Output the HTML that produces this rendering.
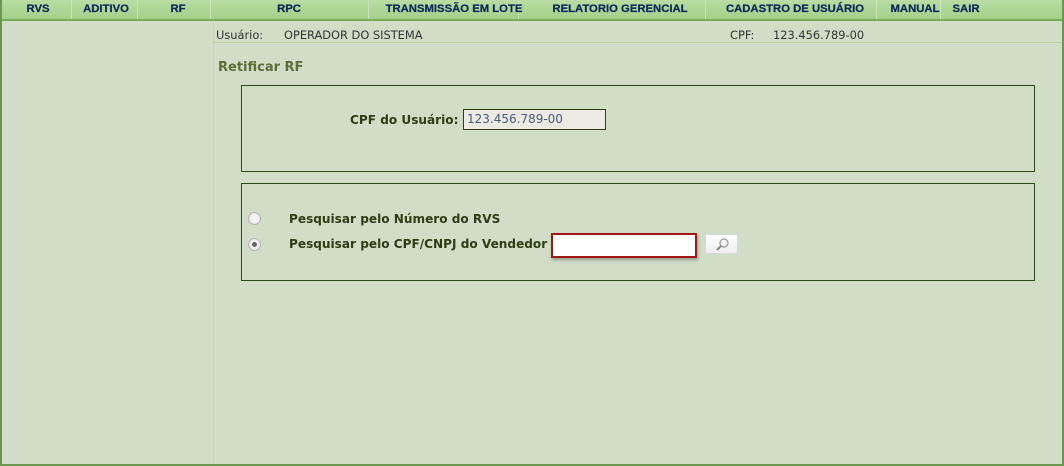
<!DOCTYPE html>
<html><head><meta charset="utf-8"><style>
*{margin:0;padding:0;box-sizing:border-box}
body{width:1064px;height:466px;background:#d1ddc6;font-family:"DejaVu Sans","Liberation Sans",sans-serif;position:relative;overflow:hidden}
.frame{position:absolute;left:0;top:0;width:1064px;height:466px;border:2px solid #6a9650;border-top:none}
.nav{position:absolute;left:0;top:0;width:1064px;height:21px;background:linear-gradient(#b9dca2,#a5cf8a);border-bottom:2px solid #78ae5a}
.nav span{position:absolute;z-index:2;top:3px;font:bold 11.3px "Liberation Sans",sans-serif;color:#0c2858;white-space:nowrap;transform:translateX(-50%);-webkit-text-stroke:0.25px #0c2858}
.sep{position:absolute;z-index:1;top:0;height:19px;width:1px;background:#c9e4b7}
.vl{position:absolute;left:213px;top:23px;width:1px;height:443px;background:#c5d8b6}
.t{position:absolute;font-size:11.4px;color:#333;white-space:nowrap}
.hl{position:absolute;left:214px;top:42px;width:848px;height:1px;background:#b9d3a5}
.box{position:absolute;left:241px;width:794px;border:1px solid #2e4a1f}
b.l{position:absolute;font:bold 12.1px "DejaVu Sans",sans-serif;color:#2e3d15;white-space:nowrap}
.radio{position:absolute;width:13px;height:13px;border-radius:50%;border:1px solid #b5b5b5;background:radial-gradient(#fff,#ddd)}
</style></head><body>
<div class="nav">
<span style="left:38px">RVS</span><div class="sep" style="left:71px"></div>
<span style="left:106px">ADITIVO</span><div class="sep" style="left:137px"></div>
<span style="left:178px">RF</span><div class="sep" style="left:210px"></div>
<span style="left:289px">RPC</span><div class="sep" style="left:368px"></div>
<span style="left:454px">TRANSMISSÃO EM LOTE</span><div class="sep" style="left:518px"></div>
<span style="left:620px">RELATORIO GERENCIAL</span><div class="sep" style="left:705px"></div>
<span style="left:795px">CADASTRO DE USUÁRIO</span><div class="sep" style="left:876px"></div>
<span style="left:915px">MANUAL</span><div class="sep" style="left:940px"></div>
<span style="left:966px">SAIR</span>
</div>
<div class="vl"></div>
<div class="t" style="left:216px;top:28px">Usuário:</div>
<div class="t" style="left:284px;top:28px">OPERADOR DO SISTEMA</div>
<div class="t" style="left:730px;top:28px">CPF:</div>
<div class="t" style="left:773px;top:28px">123.456.789-00</div>
<div class="hl"></div>
<b class="l" style="left:218px;top:60px;font-size:13px;color:#5a6e3a">Retificar RF</b>
<div class="box" style="top:85px;height:87px"></div>
<b class="l" style="left:350px;top:113px">CPF do Usuário:</b>
<div style="position:absolute;left:463px;top:109px;width:143px;height:21px;border:1px solid #2e3d1a;background:#ebebe4;font-size:12px;color:#4a5a78;padding:2px 3px">123.456.789-00</div>
<div class="box" style="top:183px;height:98px"></div>
<div class="radio" style="left:248px;top:212px"></div>
<div class="radio" style="left:248px;top:238px"><div style="position:absolute;left:3px;top:3px;width:5px;height:5px;border-radius:50%;background:#666"></div></div>
<b class="l" style="left:289px;top:212px">Pesquisar pelo Número do RVS</b>
<b class="l" style="left:289px;top:237px">Pesquisar pelo CPF/CNPJ do Vendedor</b>
<div style="position:absolute;left:551px;top:233px;width:146px;height:25px;border:2px solid #a01818;background:#fff;box-shadow:1px 2px 3px rgba(0,0,0,.3)"></div>
<div style="position:absolute;left:705px;top:234px;width:33px;height:20px;border:1px solid #d8d8d8;border-radius:2px;background:linear-gradient(#fff,#eee)">
<svg width="33" height="20" viewBox="0 0 33 20"><circle cx="18" cy="8" r="4" fill="none" stroke="#999" stroke-width="1.3"/><path d="M15 11 L11 15" stroke="#888" stroke-width="2"/></svg></div>
<div class="frame"></div>
</body></html>
